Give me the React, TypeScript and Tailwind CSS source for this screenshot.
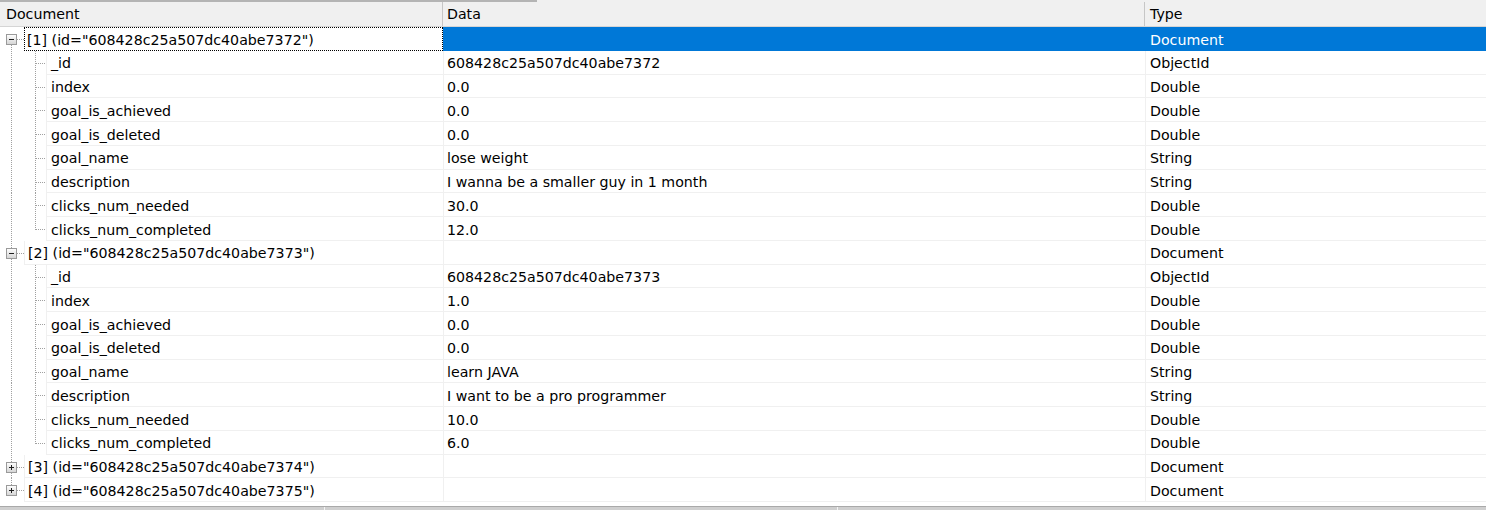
type Field = [string, string, string];

type Doc = {
  id: string;
  expanded: boolean;
  fields: Field[];
};

const docs: Doc[] = [
  {
    id: "608428c25a507dc40abe7372",
    expanded: true,
    fields: [
      ["_id", "608428c25a507dc40abe7372", "ObjectId"],
      ["index", "0.0", "Double"],
      ["goal_is_achieved", "0.0", "Double"],
      ["goal_is_deleted", "0.0", "Double"],
      ["goal_name", "lose weight", "String"],
      ["description", "I wanna be a smaller guy in 1 month", "String"],
      ["clicks_num_needed", "30.0", "Double"],
      ["clicks_num_completed", "12.0", "Double"],
    ],
  },
  {
    id: "608428c25a507dc40abe7373",
    expanded: true,
    fields: [
      ["_id", "608428c25a507dc40abe7373", "ObjectId"],
      ["index", "1.0", "Double"],
      ["goal_is_achieved", "0.0", "Double"],
      ["goal_is_deleted", "0.0", "Double"],
      ["goal_name", "learn JAVA", "String"],
      ["description", "I want to be a pro programmer", "String"],
      ["clicks_num_needed", "10.0", "Double"],
      ["clicks_num_completed", "6.0", "Double"],
    ],
  },
  { id: "608428c25a507dc40abe7374", expanded: false, fields: [] },
  { id: "608428c25a507dc40abe7375", expanded: false, fields: [] },
];

const DOT = "#a0a0a0";

// tree gutter for a document row: +/- box and the sibling line
const DocGutter = ({ first, last, expanded }: { first: boolean; last: boolean; expanded: boolean }) => (
  <svg width="24" height="100%" className="shrink-0" shapeRendering="crispEdges">
    {!first && <line x1="11.5" y1="0" x2="11.5" y2="7" stroke={DOT} strokeDasharray="1 1" />}
    {!last && <line x1="11.5" y1="18" x2="11.5" y2="24" stroke={DOT} strokeDasharray="1 1" />}
    <line x1="17" y1="12.5" x2="24" y2="12.5" stroke={DOT} strokeDasharray="1 1" />
    <defs>
      <linearGradient id="box" x1="0" y1="0" x2="0" y2="1">
        <stop offset="0" stopColor="#ffffff" />
        <stop offset="1" stopColor="#d4d4d4" />
      </linearGradient>
    </defs>
    <rect x="6.5" y="7.5" width="10" height="10" fill="url(#box)" stroke="#9a9a9a" />
    <line x1="9" y1="12.5" x2="14" y2="12.5" stroke="#1e1e1e" />
    {!expanded && <line x1="11.5" y1="10" x2="11.5" y2="15" stroke="#1e1e1e" />}
  </svg>
);

// tree gutter for a field row under a document
const FieldGutter = ({ lastChild, parentLast }: { lastChild: boolean; parentLast: boolean }) => (
  <svg width="46" height="100%" className="shrink-0" shapeRendering="crispEdges">
    {!parentLast && <line x1="11.5" y1="0" x2="11.5" y2="24" stroke={DOT} strokeDasharray="1 1" />}
    <line x1="35.5" y1="0" x2="35.5" y2={lastChild ? 13 : 24} stroke={DOT} strokeDasharray="1 1" />
    <line x1="36" y1="12.5" x2="46" y2="12.5" stroke={DOT} strokeDasharray="1 1" />
  </svg>
);

const Row = ({
  gutter,
  label,
  data,
  type,
  selected,
  labelPad,
}: {
  gutter: React.ReactNode;
  label: string;
  data: string;
  type: string;
  selected?: boolean;
  labelPad: string;
}) => (
  <div className="flex h-[23.75px] shrink-0">
    <div className="flex w-[443px] shrink-0">
      {gutter}
      <div
        className={
          selected
            ? "flex flex-1 items-center border border-dotted border-black pt-[4px] pl-[2px] whitespace-nowrap"
            : `flex flex-1 items-center border-l border-b border-[#f0f0f0] pt-[4px] ${labelPad} whitespace-nowrap`
        }
      >
        {label}
      </div>
    </div>
    <div
      className={
        selected
          ? "flex w-[702px] shrink-0 items-center bg-[#0078d7] pt-[4px] pl-1"
          : "flex w-[702px] shrink-0 items-center border-l border-b border-[#f0f0f0] pt-[4px] pl-[3px] whitespace-nowrap"
      }
    >
      {data}
    </div>
    <div
      className={
        selected
          ? "flex flex-1 items-center bg-[#0078d7] pt-[4px] pl-[5px] text-white"
          : "flex flex-1 items-center border-l border-b border-[#f0f0f0] pt-[4px] pl-[4px]"
      }
    >
      {type}
    </div>
  </div>
);

export default function App() {
  return (
    <div className="flex h-[510px] w-[1486px] flex-col overflow-hidden bg-white font-['DejaVu_Sans',sans-serif] text-[14.2px] text-black">
      <div className="flex h-[2px] shrink-0 bg-[#f0f0f0]">
        <div className="w-[537px] bg-[#b4b4b4]"></div>
      </div>
      <div className="flex h-[25px] shrink-0 border-b border-[#d5d5d5] bg-[#f0f0f0]">
        <div className="flex w-[443px] shrink-0 items-center border-r border-[#c6c6c6] pt-[2px] pl-[6px]">Document</div>
        <div className="flex w-[702px] shrink-0 items-center border-r border-[#c6c6c6] pt-[2px] pl-[4px]">Data</div>
        <div className="flex flex-1 items-center pt-[2px] pl-[5px]">Type</div>
      </div>

      <div className="flex flex-col">
        {docs.map((d, i) => {
          const last = i === docs.length - 1;
          return (
            <div key={d.id} className="flex flex-col">
              <Row
                gutter={<DocGutter first={i === 0} last={last} expanded={d.expanded} />}
                label={`[${i + 1}] (id="${d.id}")`}
                data=""
                type="Document"
                selected={i === 0}
                labelPad="pl-[3px]"
              />
              {d.expanded &&
                d.fields.map(([name, value, type], j) => (
                  <Row
                    key={name}
                    gutter={<FieldGutter lastChild={j === d.fields.length - 1} parentLast={last} />}
                    label={name}
                    data={value}
                    type={type}
                    labelPad="pl-[4px]"
                  />
                ))}
            </div>
          );
        })}
      </div>

      <div className="mt-auto flex h-[4px] shrink-0 border-t border-[#a9a9a9] bg-[#cfcfcf]">
        <div className="w-[325px] border-r border-[#f4f4f4]"></div>
        <div className="w-[513px] border-r border-[#f4f4f4]"></div>
        <div className="flex-1"></div>
      </div>
    </div>
  );
}
